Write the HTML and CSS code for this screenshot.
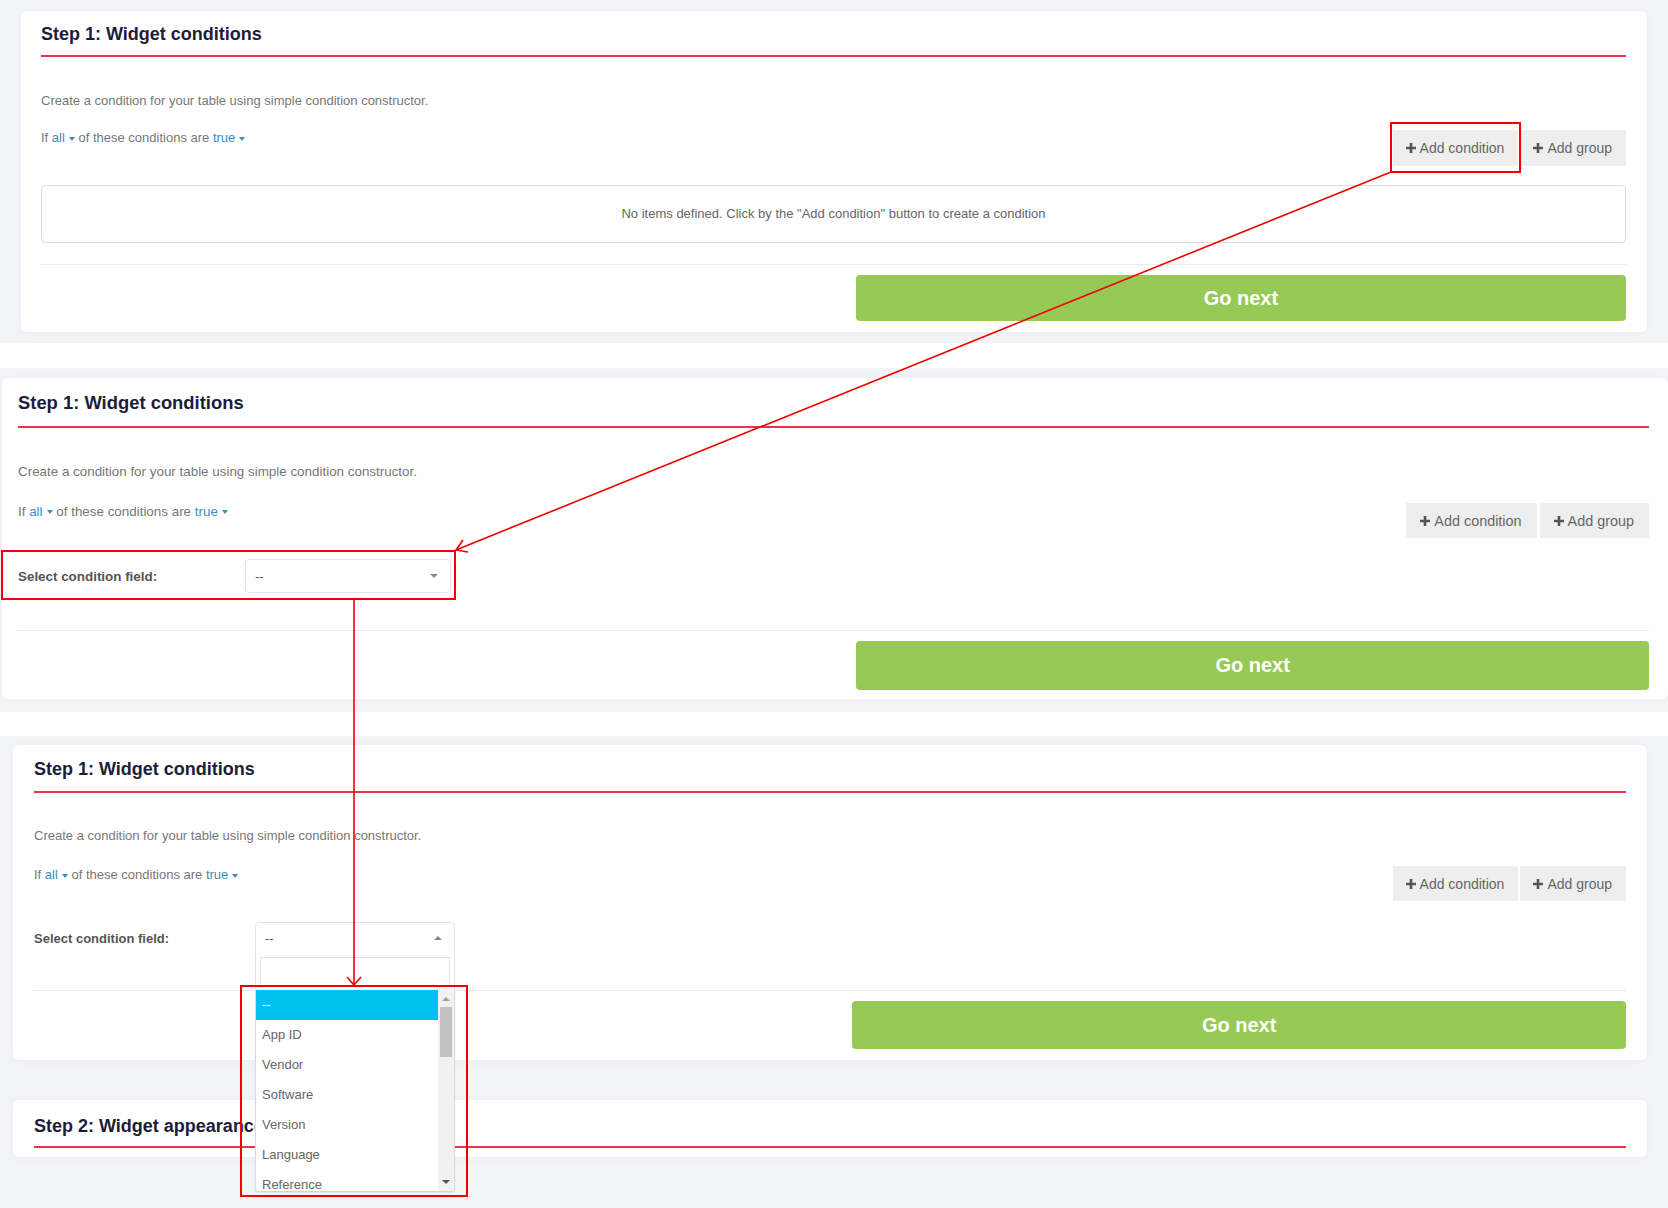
FILE: index.html
```html
<!DOCTYPE html>
<html lang="en">
<head>
    <meta charset="UTF-8">
    <meta name="viewport" content="width=device-width, initial-scale=1.0">
    <title>Widget conditions</title>
    <link rel="stylesheet" href="styles.css">
</head>
<body>
    <!-- shot 1: empty constructor -->
    <section class="shot shot-1">
        <div class="card">
            <div class="card-head"><h2 class="card-title">Step 1: Widget conditions</h2></div>
            <p class="intro">Create a condition for your table using simple condition constructor.</p>
            <div class="rule-bar">
                <div class="rule-text">If <a class="pick">all<i class="caret"></i></a> of these conditions are <a class="pick">true<i class="caret"></i></a></div>
                <div class="rule-actions">
                    <button class="btn-add"><svg class="plus" viewBox="0 0 10 10"><path d="M3.7 0h2.6v3.7H10v2.6H6.3V10H3.7V6.3H0V3.7h3.7z"/></svg>Add condition</button>
                    <button class="btn-add"><svg class="plus" viewBox="0 0 10 10"><path d="M3.7 0h2.6v3.7H10v2.6H6.3V10H3.7V6.3H0V3.7h3.7z"/></svg>Add group</button>
                </div>
            </div>
            <div class="empty-box">No items defined. Click by the "Add condition" button to create a condition</div>
            <div class="card-foot"><button class="btn-next">Go next</button></div>
        </div>
    </section>

    <!-- shot 2: condition row added -->
    <section class="shot shot-2">
        <div class="card">
            <div class="card-head"><h2 class="card-title">Step 1: Widget conditions</h2></div>
            <p class="intro">Create a condition for your table using simple condition constructor.</p>
            <div class="rule-bar">
                <div class="rule-text">If <a class="pick">all<i class="caret"></i></a> of these conditions are <a class="pick">true<i class="caret"></i></a></div>
                <div class="rule-actions">
                    <button class="btn-add"><svg class="plus" viewBox="0 0 10 10"><path d="M3.7 0h2.6v3.7H10v2.6H6.3V10H3.7V6.3H0V3.7h3.7z"/></svg>Add condition</button>
                    <button class="btn-add"><svg class="plus" viewBox="0 0 10 10"><path d="M3.7 0h2.6v3.7H10v2.6H6.3V10H3.7V6.3H0V3.7h3.7z"/></svg>Add group</button>
                </div>
            </div>
            <div class="field-row">
                <label class="field-label">Select condition field:</label>
                <div class="select"><span>--</span><i class="select-arrow"></i></div>
            </div>
            <div class="card-foot"><button class="btn-next">Go next</button></div>
        </div>
    </section>

    <!-- shot 3: field list open -->
    <section class="shot shot-3">
        <div class="card">
            <div class="card-head"><h2 class="card-title">Step 1: Widget conditions</h2></div>
            <p class="intro">Create a condition for your table using simple condition constructor.</p>
            <div class="rule-bar">
                <div class="rule-text">If <a class="pick">all<i class="caret"></i></a> of these conditions are <a class="pick">true<i class="caret"></i></a></div>
                <div class="rule-actions">
                    <button class="btn-add"><svg class="plus" viewBox="0 0 10 10"><path d="M3.7 0h2.6v3.7H10v2.6H6.3V10H3.7V6.3H0V3.7h3.7z"/></svg>Add condition</button>
                    <button class="btn-add"><svg class="plus" viewBox="0 0 10 10"><path d="M3.7 0h2.6v3.7H10v2.6H6.3V10H3.7V6.3H0V3.7h3.7z"/></svg>Add group</button>
                </div>
            </div>
            <div class="field-row">
                <label class="field-label">Select condition field:</label>
                <div class="select is-open">
                    <span>--</span><i class="select-arrow"></i>
                    <div class="dropdown">
                        <div class="dropdown-search"><div class="search-box"></div></div>
                        <div class="option-list">
                            <div class="options">
                                <div class="option is-active">--</div>
                                <div class="option">App ID</div>
                                <div class="option">Vendor</div>
                                <div class="option">Software</div>
                                <div class="option">Version</div>
                                <div class="option">Language</div>
                                <div class="option">Reference</div>
                            </div>
                            <div class="scrollbar">
                                <i class="scroll-up"></i>
                                <div class="scroll-thumb"></div>
                                <i class="scroll-down"></i>
                            </div>
                        </div>
                    </div>
                </div>
            </div>
            <div class="card-foot"><button class="btn-next">Go next</button></div>
        </div>

        <div class="card step-two">
            <div class="card-head"><h2 class="card-title">Step 2: Widget appearance</h2></div>
        </div>
    </section>

    <!-- red annotations drawn over the shots -->
    <svg class="notes" width="1668" height="1208" viewBox="0 0 1668 1208">
        <g fill="none" stroke="#f20000" stroke-width="2">
            <rect x="1391" y="123" width="129" height="49"/>
            <rect x="2" y="551" width="453" height="48"/>
            <rect x="241" y="986" width="226" height="210"/>
        </g>
        <g fill="none" stroke="#f20000" stroke-width="1.6">
            <line x1="1391" y1="172" x2="456" y2="550"/>
            <polyline points="468,552 456,550 463,540"/>
            <line x1="354" y1="600" x2="354" y2="985"/>
            <polyline points="347,977 354,985 361,977"/>
        </g>
    </svg>
</body>
</html>
```

FILE: styles.css
```css
* {
    box-sizing: border-box;
}
body {
    margin: 0;
    width: 1668px;
    height: 1208px;
    position: relative;
    overflow: hidden;
    background-color: #fff;
    font-family: "Liberation Sans", Arial, sans-serif;
    color: #777;
}
.shot {
    background-color: #f3f4f8;
}
.shot-1 {
    padding: 11px 21px 11px 21px;
}
.shot-2 {
    margin-top: 25px;
    padding: 10px 0 13px 2px;
}
.shot-3 {
    margin-top: 24px;
    padding: 9px 21px 51px 13px;
}
.card {
    background-color: #fff;
    border-radius: 6px;
    box-shadow: 0 1px 8px rgba(40, 50, 90, 0.04);
}
.shot-1 .card {
    padding: 0 21px 11px 20px;
}
.shot-2 .card {
    padding: 0 19px 9px 16px;
}
.shot-3 .card {
    padding: 0 21px 11px 21px;
}
.card-head {
    border-bottom: 2px solid #e6354f;
}
.card-title {
    margin: 0;
    font-size: 18px;
    line-height: 22px;
    font-weight: bold;
    color: #1d1d3b;
}
.shot-1 .card-head {
    padding: 12px 0 10px;
}
.shot-2 .card-head {
    padding: 14px 0 12px;
}
.shot-2 .card-title {
    font-size: 18.4px;
}
.shot-3 .card-head {
    padding: 13px 0 11px;
}
.intro {
    margin: 35px 0 0;
    font-size: 13px;
    line-height: 18px;
    color: #777;
}
.shot-2 .intro {
    font-size: 13.4px;
}
.shot-3 .intro {
    margin-top: 34px;
}
.rule-bar {
    display: flex;
    justify-content: space-between;
    align-items: flex-start;
    margin-top: 19px;
}
.shot-2 .rule-bar {
    margin-top: 22px;
}
.shot-3 .rule-bar {
    margin-top: 21px;
}
.rule-text {
    font-size: 13px;
    line-height: 18px;
    color: #777;
}
.shot-2 .rule-text {
    font-size: 13.4px;
}
.pick {
    color: #3c8dbc;
}
.caret {
    display: inline-block;
    margin-left: 4px;
    vertical-align: middle;
    border-top: 4px solid #3c8dbc;
    border-left: 3.5px solid transparent;
    border-right: 3.5px solid transparent;
}
.rule-actions {
    display: flex;
    gap: 2px;
}
.shot-1 .rule-actions {
    margin-top: 1px;
}
.shot-2 .rule-actions {
    gap: 3px;
}
.btn-add {
    display: inline-flex;
    align-items: center;
    gap: 4px;
    height: 35px;
    padding: 0 14px 0 13px;
    border: 0;
    background-color: #eeeeee;
    font-family: inherit;
    font-size: 14px;
    color: #666;
}
.shot-1 .btn-add {
    height: 36px;
}
.shot-2 .btn-add {
    font-size: 14.4px;
    padding: 0 15px 0 14px;
}
.plus {
    width: 10px;
    height: 10px;
    fill: #555;
}
.empty-box {
    margin-top: 19px;
    height: 58px;
    line-height: 56px;
    border: 1px solid #dedede;
    border-radius: 4px;
    text-align: center;
    font-size: 13px;
    color: #666;
}
.card-foot {
    display: flex;
    justify-content: flex-end;
    margin-top: 21px;
    padding-top: 10px;
    border-top: 1px solid #ececec;
}
.shot-2 .card-foot {
    margin-top: 37px;
}
.shot-3 .card-foot {
    margin-top: 36px;
}
.btn-next {
    width: 48.6%;
    height: 46px;
    border: 0;
    border-radius: 4px;
    background-color: #97c957;
    font-family: inherit;
    font-size: 20px;
    font-weight: bold;
    color: #fff;
}
.shot-2 .btn-next {
    height: 49px;
}
.shot-3 .btn-next {
    height: 48px;
}
.field-row {
    display: flex;
    align-items: center;
    margin-top: 21px;
}
.field-label {
    width: 221px;
    font-size: 13px;
    font-weight: bold;
    color: #555;
}
.shot-2 .field-label {
    width: 227px;
    font-size: 13.4px;
}
.select {
    position: relative;
    display: flex;
    align-items: center;
    justify-content: space-between;
    width: 200px;
    height: 32px;
    padding: 0 12px 0 9px;
    border: 1px solid #e3e3e3;
    border-radius: 4px;
    font-size: 13px;
    color: #555;
}
.shot-2 .select {
    width: 206px;
    height: 34px;
}
.select-arrow {
    border-top: 4px solid #888;
    border-left: 4px solid transparent;
    border-right: 4px solid transparent;
}
.is-open {
    border-radius: 4px 4px 0 0;
}
.is-open .select-arrow {
    border-top: 0;
    border-bottom: 4px solid #888;
}
.dropdown {
    position: absolute;
    top: 100%;
    left: -1px;
    right: -1px;
    z-index: 5;
    border: 1px solid #e5e5e5;
    border-top: 0;
    background-color: #fff;
}
.dropdown-search {
    padding: 4px;
}
.search-box {
    height: 29px;
    border: 1px solid #e2e2e2;
}
.option-list {
    display: flex;
    height: 201px;
    overflow: hidden;
    border-radius: 0 0 3px 3px;
    box-shadow: 0 1px 3px rgba(0, 0, 0, 0.12);
}
.options {
    flex: 1;
}
.option {
    height: 30px;
    line-height: 30px;
    padding-left: 6px;
    font-size: 13px;
    color: #666;
}
.option.is-active {
    background-color: #00c0ef;
    color: #fff;
}
.scrollbar {
    position: relative;
    width: 16px;
    background-color: #f1f1f1;
}
.scroll-thumb {
    position: absolute;
    top: 17px;
    left: 2px;
    right: 2px;
    height: 50px;
    background-color: #c1c1c1;
}
.scroll-up,
.scroll-down {
    position: absolute;
    left: 4px;
    border-left: 4px solid transparent;
    border-right: 4px solid transparent;
}
.scroll-up {
    top: 7px;
    border-bottom: 4px solid #a3a3a3;
}
.scroll-down {
    bottom: 7px;
    border-top: 4px solid #505050;
}
.step-two {
    margin-top: 40px;
}
.shot-3 .step-two {
    padding-bottom: 9px;
}
.step-two .card-head {
    padding: 15px 0 9px;
}
.notes {
    position: absolute;
    top: 0;
    left: 0;
    z-index: 10;
    pointer-events: none;
}
```
